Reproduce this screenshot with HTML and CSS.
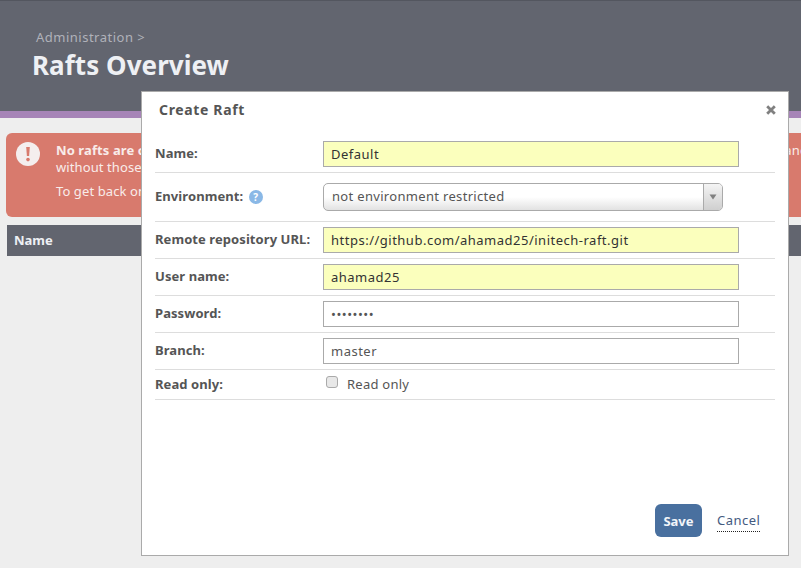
FILE: index.html
```html
<!DOCTYPE html>
<html lang="en">
<head>
<meta charset="utf-8">
<title>Rafts Overview</title>
<link rel="stylesheet" href="styles.css">
</head>
<body>
<header class="page-header">
  <div class="crumb">Administration &gt;</div>
  <h1 class="page-title">Rafts Overview</h1>
</header>
<main class="content">
  <div class="alert">
    <svg class="alert-icon" width="24" height="24" viewBox="0 0 24 24">
      <circle cx="12" cy="12" r="12" fill="#f4eeee"/>
      <path d="M10.2 5h3.6l-.7 9h-2.2z" fill="#d87a6d"/>
      <circle cx="12" cy="17.6" r="1.8" fill="#d87a6d"/>
    </svg>
    <div class="alert-body">
      <p class="alert-line alert-first"><strong>No rafts are configured.</strong> <span>Nothing can be deployed yet, and</span></p>
      <p class="alert-line">without those nothing can run.</p>
      <p class="alert-line alert-gap">To get back on track, create a raft.</p>
    </div>
  </div>
  <div class="table-head">Name</div>
</main>

<section class="modal">
  <div class="modal-head">
    <h2 class="modal-title">Create Raft</h2>
    <svg class="modal-close" width="10" height="10" viewBox="0 0 10 10"><path d="M1.2 1.2l7.6 7.6M8.8 1.2L1.2 8.8" stroke="#808080" stroke-width="2.8"/></svg>
  </div>
  <form class="form">
    <div class="row">
      <label class="label">Name:</label>
      <input class="input filled" type="text" value="Default">
    </div>
    <div class="row row-select">
      <label class="label">Environment: <span class="help">?</span></label>
      <div class="select">
        <span class="select-text">not environment restricted</span>
        <span class="select-arrow"><svg width="8" height="6" viewBox="0 0 8 6"><path d="M0.5 0.5h7L4 5.5z" fill="#808080"/></svg></span>
      </div>
    </div>
    <div class="row">
      <label class="label">Remote repository URL:</label>
      <input class="input filled" type="text" value="https://github.com/ahamad25/initech-raft.git">
    </div>
    <div class="row">
      <label class="label">User name:</label>
      <input class="input filled" type="text" value="ahamad25">
    </div>
    <div class="row">
      <label class="label">Password:</label>
      <input class="input" type="password" value="password">
    </div>
    <div class="row">
      <label class="label">Branch:</label>
      <input class="input" type="text" value="master">
    </div>
    <div class="row row-check">
      <label class="label">Read only:</label>
      <label class="check"><input class="checkbox" type="checkbox"> Read only</label>
    </div>
  </form>
  <div class="modal-foot">
    <button class="save" type="button">Save</button>
    <a class="cancel">Cancel</a>
  </div>
</section>
</body>
</html>
```
FILE: styles.css
```css
* { box-sizing: border-box; }
html, body { margin: 0; height: 100%; overflow: hidden; }
body {
  background: #eeeeee;
  font-family: "Noto Sans", sans-serif;
  font-size: 13px;
  color: #555;
  position: relative;
}
.page-header {
  height: 118px;
  background: #62656f;
  border-top: 1px solid #53565f;
  border-bottom: 7px solid #a684b7;
  padding: 27px 0 0 32px;
}
.crumb { margin-left: 4px; font-size: 13px; line-height: 18px; color: #b0b2ba; letter-spacing: .5px; }
.page-title { margin: 1px 0 0; font-size: 26px; line-height: 36px; font-weight: 700; color: #eef0f4; letter-spacing: .05px; }
.content { padding: 15px 0 0 6px; }
.alert {
  height: 84px;
  background: #d87a6d;
  border-radius: 6px 0 0 6px;
  display: flex;
  padding: 9px 0 0 10px;
  color: #f8ecea;
  overflow: hidden;
}
.alert-icon { margin-top: 0; flex: none; }
.alert-body { margin-left: 16px; flex: none; }
.alert-line { margin: 0; font-size: 13px; line-height: 17px; white-space: nowrap; letter-spacing: .1px; }
.alert-first { display: flex; justify-content: space-between; width: 752px; }
.alert-gap { margin-top: 7px; }
.table-head {
  margin: 8px 0 0 1px;
  height: 31px;
  background: #62656f;
  color: #eef0f4;
  font-weight: 700;
  font-size: 13px;
  line-height: 31px;
  padding-left: 7px;
}
.modal {
  position: absolute;
  left: 141px;
  top: 91px;
  width: 648px;
  height: 465px;
  background: #fff;
  border: 1px solid #aaaaaa;
  display: flex;
  flex-direction: column;
}
.modal-head {
  height: 44px;
  flex: none;
  display: flex;
  align-items: center;
  justify-content: space-between;
  padding: 0 12px 9px 17px;
}
.modal-title { margin: 0; font-size: 14px; font-weight: 700; color: #555; letter-spacing: .65px; }
.modal-close { display: block; }
.form { margin: 0 13px; }
.row {
  display: flex;
  align-items: flex-start;
  padding: 5px 0;
  border-bottom: 1px solid #dddddd;
}
.row-select { padding: 10px 0; }
.row-select .label { line-height: 26px; }
.row-check { padding: 5px 0 0; height: 30px; }
.row-check .label { line-height: 18px; }
.label {
  flex: none;
  width: 168px;
  font-size: 13px;
  font-weight: 700;
  line-height: 24px;
  color: #555;
  letter-spacing: .07px;
  white-space: nowrap;
}
.help {
  display: inline-block;
  width: 14px;
  height: 14px;
  margin-left: 2px;
  border-radius: 50%;
  background: #8ab8e6;
  color: #fff;
  font-size: 10px;
  font-weight: 700;
  line-height: 14px;
  text-align: center;
  letter-spacing: 0;
}
.input {
  display: block;
  width: 416px;
  height: 26px;
  padding: 0 7px;
  margin: 0;
  border: 1px solid #aaaaaa;
  border-radius: 0;
  background: #fff;
  outline: none;
  font-family: "Noto Sans", sans-serif;
  font-size: 13px;
  color: #555;
  letter-spacing: .5px;
}
.filled { background: #fbffbd; color: #333; }
.select {
  display: flex;
  width: 400px;
  height: 28px;
  border: 1px solid #aaaaaa;
  border-radius: 5px;
  background: linear-gradient(#ffffff 50%, #e2e2e2);
  overflow: hidden;
}
.select-text { flex: 1; padding-left: 8px; font-size: 13px; line-height: 24px; color: #555; letter-spacing: .32px; }
.select-arrow {
  flex: none;
  width: 19px;
  display: flex;
  align-items: center;
  justify-content: center;
  border-left: 1px solid #aaaaaa;
  background: linear-gradient(#f4f4f4, #cfcfcf);
}
.check { display: flex; align-items: center; font-size: 13px; line-height: 18px; color: #555; letter-spacing: .25px; }
.checkbox {
  appearance: none;
  width: 12px;
  height: 12px;
  margin: 0 9px 4px 3px;
  background: #e8e8e8;
  border: 1px solid #aaaaaa;
  border-radius: 3px;
}
.modal-foot {
  margin-top: auto;
  padding: 0 28px 18px 0;
  display: flex;
  justify-content: flex-end;
  align-items: flex-start;
  gap: 15px;
}
.save {
  width: 47px;
  height: 33px;
  padding: 0;
  border: 0;
  border-radius: 6px;
  background: #49709f;
  color: #f2f5f9;
  font-family: "Noto Sans", sans-serif;
  font-size: 13px;
  font-weight: 700;
}
.cancel {
  margin-top: 8px;
  height: 20px;
  width: 43px;
  font-size: 13px;
  line-height: 17px;
  color: #445a7f;
  letter-spacing: .5px;
  white-space: nowrap;
  border-bottom: 1px dotted #222;
}
```
